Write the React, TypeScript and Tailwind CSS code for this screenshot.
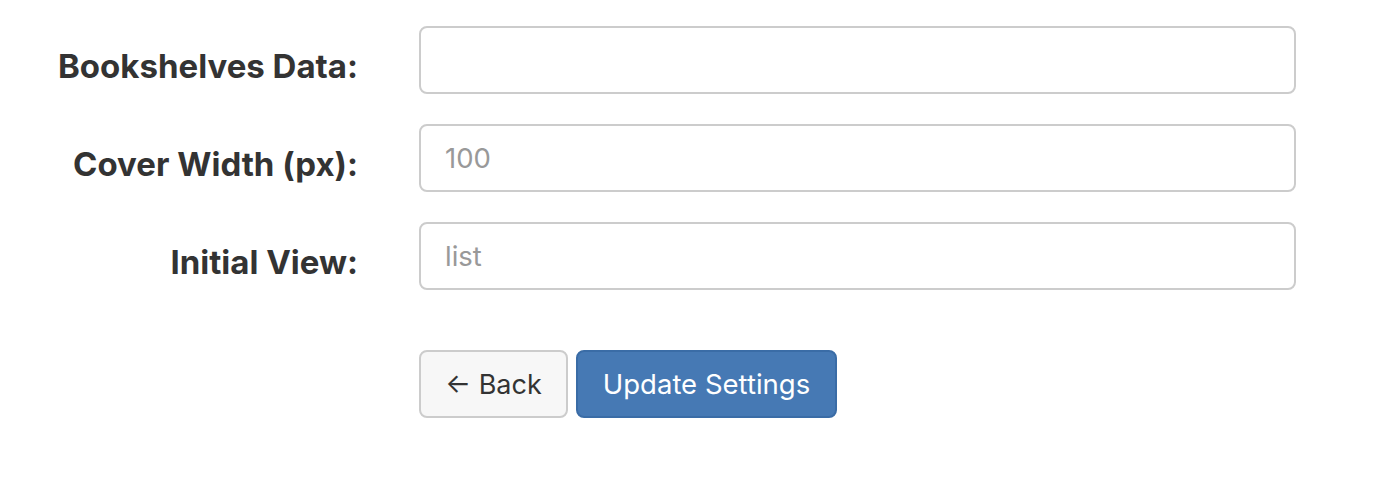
import React from "react";

const labelCls =
  "w-[358px] shrink-0 text-right text-[33px] font-bold text-[#333333] pt-[20px] leading-[40px]";
const inputCls =
  "w-[877px] h-[68px] border-2 border-[#cccccc] rounded-[8px] px-[24px] text-[27.5px] text-[#555555] placeholder:text-[#999999] bg-white outline-none";

export default function App() {
  return (
    <div className="w-[1377px] h-[498px] bg-white font-['Inter',sans-serif] pt-[26px]">
      <form className="flex flex-col gap-[30px]">
        <div className="flex gap-[61px]">
          <label className={labelCls}>Bookshelves Data:</label>
          <input type="text" className={inputCls} />
        </div>
        <div className="flex gap-[61px]">
          <label className={labelCls}>Cover Width (px):</label>
          <input type="text" placeholder="100" className={inputCls} />
        </div>
        <div className="flex gap-[61px]">
          <label className={labelCls}>Initial View:</label>
          <input type="text" placeholder="list" className={inputCls} />
        </div>
      </form>
      <div className="flex gap-[8px] pl-[419px] mt-[60px]">
        <button
          type="button"
          className="h-[68px] w-[149px] border-2 border-[#cccccc] rounded-[8px] bg-[#f7f7f7] text-[27px] text-[#333333] pt-[2px]"
        >
          ← Back
        </button>
        <button
          type="button"
          className="h-[68px] w-[261px] border-2 border-[#3a6ca6] rounded-[8px] bg-[#4679b4] text-[27.5px] text-white pt-[2px]"
        >
          Update Settings
        </button>
      </div>
    </div>
  );
}
